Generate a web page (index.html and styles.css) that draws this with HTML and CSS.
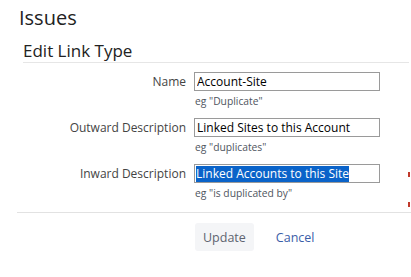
FILE: index.html
```html
<!doctype html>
<html lang="en">
    <head>
        <meta charset="UTF-8" />
        <title>Edit Link Type</title>
        <link rel="stylesheet" href="styles.css">
    </head>
    <body>
        <div class="page">
            <h1 class="title">Issues</h1>
            <h2 class="section">Edit Link Type</h2>
            <form class="form">
                <div class="field">
                    <label class="label" for="name">Name</label>
                    <div class="control">
                        <input class="text" id="name" type="text" value="Account-Site" />
                        <div class="hint">eg "Duplicate"</div>
                    </div>
                </div>
                <div class="field">
                    <label class="label" for="outward">Outward Description</label>
                    <div class="control">
                        <input class="text" id="outward" type="text" value="Linked Sites to this Account" />
                        <div class="hint">eg "duplicates"</div>
                    </div>
                </div>
                <div class="field">
                    <label class="label" for="inward">Inward Description</label>
                    <div class="control">
                        <div class="text selected-box"><span class="selected">Linked Accounts to this Site</span></div>
                        <div class="hint">eg "is duplicated by"</div>
                    </div>
                    <div class="marks"></div>
                </div>
                <div class="buttons">
                    <button type="button" class="btn">Update</button>
                    <a class="cancel" href="#">Cancel</a>
                </div>
            </form>
        </div>
    </body>
</html>
```

FILE: styles.css
```css
body {
    margin: 0;
    background: #fff;
    font-family: "Open Sans", sans-serif;
    color: #333;
}
.page {
    padding: 4px 0 0 0;
}
.title {
    margin: 0 0 0 19px;
    font-size: 20px;
    font-weight: 400;
    line-height: 28px;
    color: #222;
}
.section {
    margin: 8px 2px 0 23px;
    font-size: 17px;
    font-weight: 400;
    line-height: 22px;
    color: #222;
    border-bottom: 1px solid #e6e6e6;
}
.form {
    margin-top: 9px;
}
.field {
    display: flex;
    align-items: flex-start;
    position: relative;
    padding-bottom: 10px;
}
.label {
    width: 194px;
    padding-right: 8px;
    box-sizing: border-box;
    text-align: right;
    font-size: 12px;
    line-height: 19px;
    color: #444;
}
.control {
    display: flex;
    flex-direction: column;
}
.text {
    width: 186px;
    height: 19px;
    box-sizing: border-box;
    border: 1px solid #9a9a9a;
    padding: 0 2px;
    margin: 0;
    font-family: "Open Sans", sans-serif;
    font-size: 12px;
    color: #000;
    background: #fff;
    outline: none;
}
.selected-box {
    display: flex;
    align-items: center;
    padding: 0 1px;
}
.selected {
    background: #0a63c9;
    color: #fff;
    line-height: 16px;
}
.hint {
    margin: 4px 0 0 1px;
    font-size: 10.3px;
    line-height: 13px;
    color: #4f5560;
}
.marks {
    position: absolute;
    right: 1px;
    top: 8px;
    width: 2px;
    height: 35px;
    border-top: 5px solid #c0392b;
    border-bottom: 5px solid #c0392b;
    box-sizing: border-box;
}
.buttons {
    display: flex;
    align-items: center;
    gap: 22px;
    margin: 2px 0 0 17px;
    padding: 10px 0 0 178px;
    border-top: 1px solid #e2e2e2;
}
.btn {
    background: #f4f5f7;
    border: none;
    border-radius: 3px;
    height: 28px;
    padding: 0 8px;
    font-family: "Open Sans", sans-serif;
    font-size: 12.5px;
    color: #5e6470;
}
.cancel {
    font-size: 12.5px;
    color: #3b5ea8;
    text-decoration: none;
}
```
